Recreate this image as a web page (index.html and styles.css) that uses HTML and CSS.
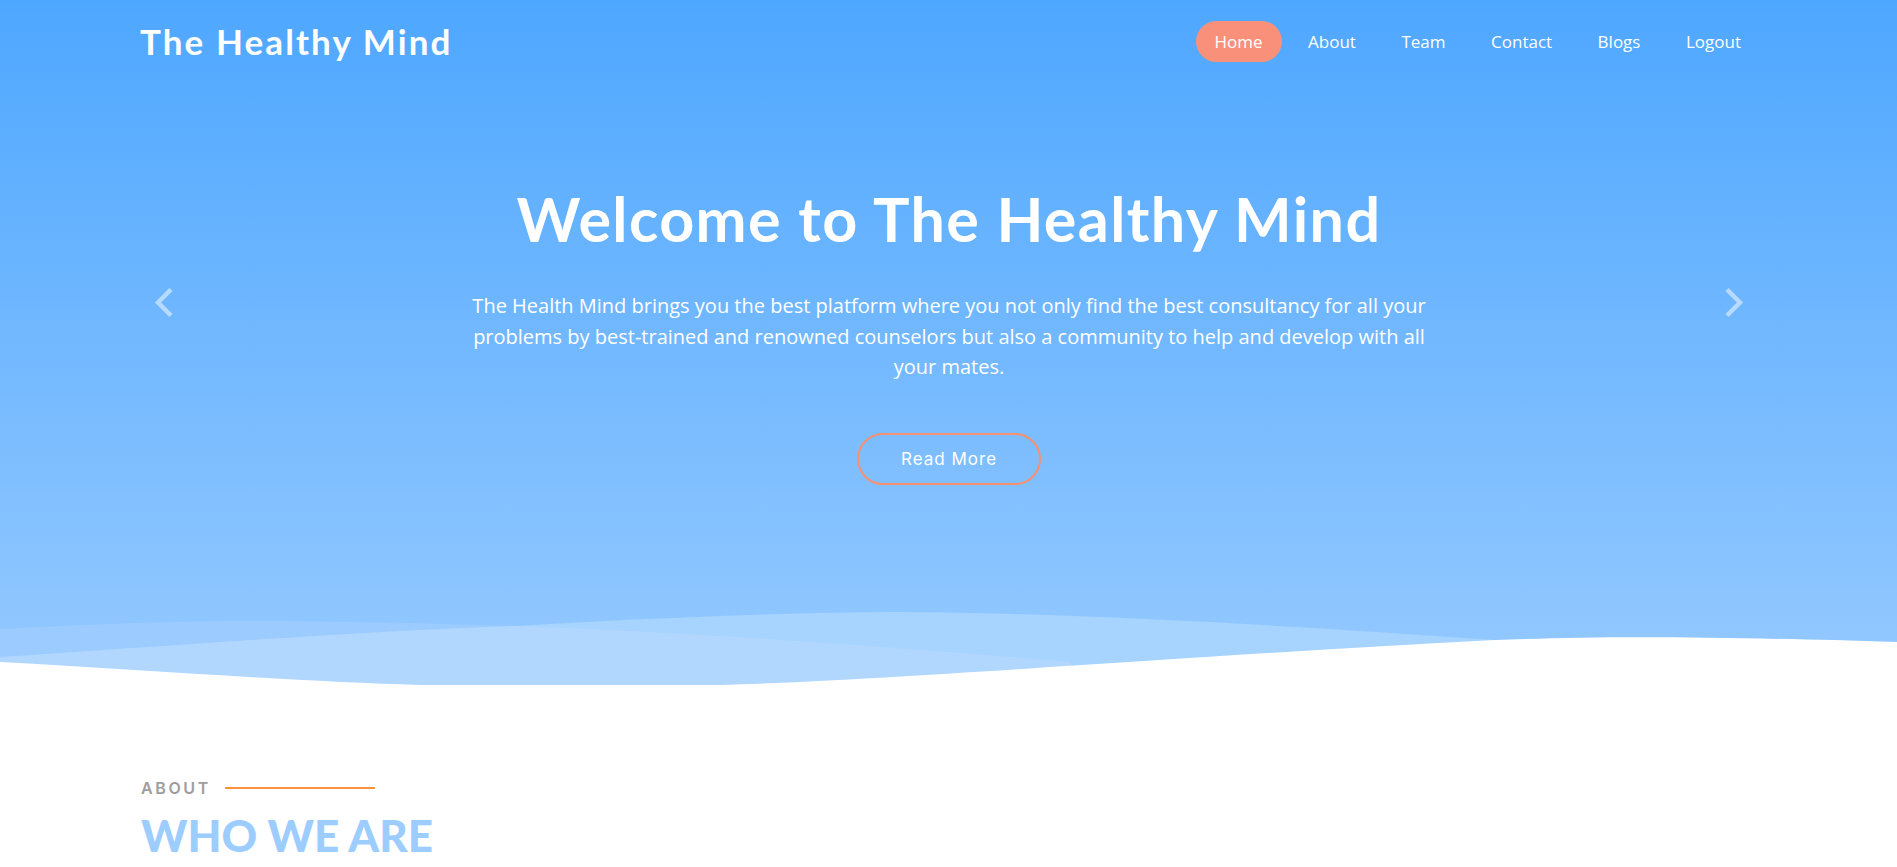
FILE: index.html
```html
<!DOCTYPE html>
<html lang="en">
<head>
<meta charset="utf-8">
<title>The Healthy Mind</title>
<link rel="stylesheet" href="styles.css">
</head>
<body>
<section class="hero">
  <header class="topbar">
    <a class="logo" href="#">The Healthy Mind</a>
    <nav>
      <ul class="menu">
        <li><a class="active" href="#">Home</a></li>
        <li><a href="#">About</a></li>
        <li><a href="#">Team</a></li>
        <li><a href="#">Contact</a></li>
        <li><a href="#">Blogs</a></li>
        <li><a href="#">Logout</a></li>
      </ul>
    </nav>
  </header>
  <div class="carousel">
    <a class="arrow" href="#" aria-label="Previous">
      <svg width="20" height="31" viewBox="0 0 20 31"><polyline points="17,2.5 4,15.5 17,28.5" fill="none" stroke="currentColor" stroke-width="4.5"/></svg>
    </a>
    <div class="slide">
      <h1 class="title">Welcome to The Healthy Mind</h1>
      <p class="lead">The Health Mind brings you the best platform where you not only find the best consultancy for all your problems by best-trained and renowned counselors but also a community to help and develop with all your mates.</p>
      <a class="btn" href="#">Read More</a>
    </div>
    <a class="arrow" href="#" aria-label="Next">
      <svg width="20" height="31" viewBox="0 0 20 31"><polyline points="3,2.5 16,15.5 3,28.5" fill="none" stroke="currentColor" stroke-width="4.5"/></svg>
    </a>
  </div>
  <svg class="waves" viewBox="0 0 1897 100" preserveAspectRatio="none">
    <path fill="#9ccbff" d="M0,29 C100,24 200,20 285,21 C380,22 450,24 515,26 L515,100 L0,100 Z"/>
    <path fill="#a7d3ff" d="M515,26 C650,18 800,12 900,12 C1100,13 1350,30 1495,40 L1495,100 L515,100 Z"/>
    <path fill="#b2d7ff" d="M0,57 C180,45 380,30 515,26 C700,33 880,46 1071,62 L1071,100 L0,100 Z"/>
    <path fill="#ffffff" d="M0,62 C150,70 300,82 420,85 L720,85 C900,80 1200,55 1495,40 C1600,36 1700,36 1897,42 L1897,100 L0,100 Z"/>
  </svg>
</section>
<section class="about">
  <div class="eyebrow">
    <span class="eyebrow-text">ABOUT</span>
    <span class="eyebrow-line"></span>
  </div>
  <h2 class="section-title">WHO WE ARE</h2>
</section>
</body>
</html>
```
FILE: styles.css
```css
* { box-sizing: border-box; }
html, body { margin: 0; padding: 0; }
body {
  font-family: "Open Sans", "Noto Sans", sans-serif;
  background: #ffffff;
  overflow: hidden;
}
a { text-decoration: none; color: inherit; }

.hero {
  background: linear-gradient(180deg, #4ea7ff 0%, #97caff 100%);
  color: #ffffff;
}

.topbar {
  display: flex;
  justify-content: space-between;
  align-items: center;
  padding: 21px 137px 0 140px;
}
.logo {
  font-family: "Lato", sans-serif;
  font-weight: 700;
  font-size: 35px;
  line-height: 41px;
  color: #ffffff;
  letter-spacing: 2.1px;
}
.menu {
  display: flex;
  gap: 7.5px;
  list-style: none;
  margin: 0;
  padding: 0;
}
.menu a {
  display: block;
  padding: 0 19px;
  line-height: 41px;
  border-radius: 21px;
  font-size: 17px;
  color: #ffffff;
}
.menu a.active { background: #f9917a; }

.carousel {
  display: flex;
  align-items: flex-start;
  padding: 120px 153px 0 154px;
}
.arrow {
  display: block;
  width: 20px;
  height: 31px;
  margin-top: 105px;
  color: rgba(255, 255, 255, 0.5);
}
.arrow svg { display: block; }
.slide {
  flex: 1;
  text-align: center;
}
.title {
  margin: 0;
  font-family: "Lato", sans-serif;
  font-weight: 700;
  font-size: 61px;
  line-height: 73px;
  letter-spacing: 1.4px;
}
.lead {
  max-width: 980px;
  margin: 36px auto 0;
  font-size: 20px;
  line-height: 30.5px;
}
.btn {
  display: inline-block;
  margin-top: 50px;
  width: 184px;
  height: 52px;
  line-height: 48px;
  border: 2px solid #f7906f;
  border-radius: 26px;
  font-family: "Inter", sans-serif;
  font-weight: 400;
  font-size: 17px;
  letter-spacing: 1px;
  color: #ffffff;
}
.waves {
  display: block;
  width: 100%;
  height: 100px;
  margin-top: 115px;
}

.about {
  padding: 76px 141px 0;
}
.eyebrow {
  display: flex;
  align-items: center;
  gap: 14px;
}
.eyebrow-text {
  font-family: "Inter", sans-serif;
  font-weight: 600;
  font-size: 16px;
  line-height: 24px;
  letter-spacing: 2.6px;
  color: #9e9e9e;
}
.eyebrow-line {
  width: 150px;
  height: 2px;
  background: #f7923a;
}
.section-title {
  margin: 8px 0 0;
  font-family: "Lato", sans-serif;
  font-weight: 900;
  font-size: 44px;
  line-height: 54px;
  letter-spacing: 0;
  color: #9dcdff;
}
```
